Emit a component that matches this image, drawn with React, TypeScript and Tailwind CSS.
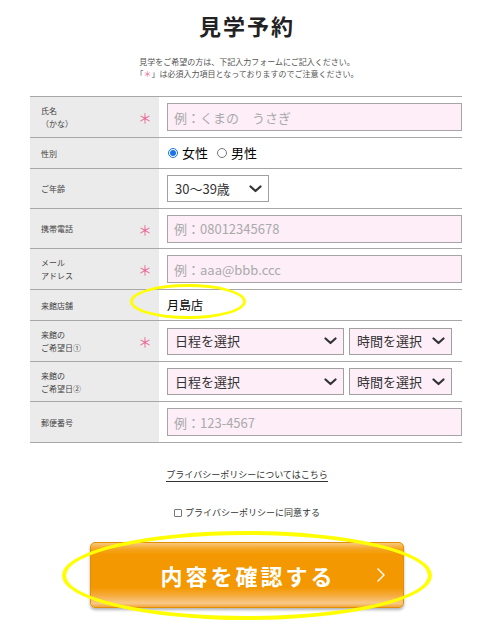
import React from "react";

const font = "font-['Noto_Sans_CJK_JP','Noto_Sans',sans-serif]";

const Chevron = () => (
    <svg width="13" height="8" viewBox="0 0 13 8" className="shrink-0">
        <path d="M1.5 1.5 L6.5 6 L11.5 1.5" fill="none" stroke="#333" strokeWidth="2.2" strokeLinecap="round" strokeLinejoin="round" />
    </svg>
);

interface RowProps {
    label: React.ReactNode;
    required?: boolean;
    h: string;
    children: React.ReactNode;
}

const Row: React.FC<RowProps> = ({ label, required, h, children }) => (
    <div className={`flex border-b border-[#a8a8a8] ${h}`}>
        <div className="flex w-[129px] shrink-0 items-center justify-between bg-[#ebebeb] pl-[11px] pr-[7px]">
            <div className="text-[8px] leading-[13px] text-[#444]">{label}</div>
            {required && <span className="text-[14px] leading-none text-[#ee6a98]">＊</span>}
        </div>
        <div className="relative flex flex-1 items-center gap-[5px] pl-[8px]">{children}</div>
    </div>
);

const TextBox: React.FC<{ ph: string }> = ({ ph }) => (
    <input
        readOnly
        placeholder={ph}
        className="h-[28px] w-full border border-[#a5a5a5] bg-[#fdeef8] px-[6px] text-[13px] text-[#333] outline-none placeholder:text-[#aaa]"
    />
);

const Select: React.FC<{ text: string; w: string; pink?: boolean }> = ({ text, w, pink }) => (
    <div
        className={`flex h-[27px] items-center justify-between border border-[#a0a0a0] pl-[7px] pr-[6px] text-[13px] text-[#333] ${w} ${pink ? "bg-[#fdeef8]" : "bg-white"}`}
    >
        <span>{text}</span>
        <Chevron />
    </div>
);

const Radio: React.FC<{ on?: boolean; text: string }> = ({ on, text }) => (
    <div className="flex items-center gap-[4px] text-[13px] text-black">
        {on ? (
            <span className="flex h-[10px] w-[10px] items-center justify-center rounded-full border border-[#1a73e8]">
                <span className="h-[6px] w-[6px] rounded-full bg-[#1a73e8]" />
            </span>
        ) : (
            <span className="h-[10px] w-[10px] rounded-full border border-[#777]" />
        )}
        <span>{text}</span>
    </div>
);

export default function App() {
    return (
        <div className={`relative min-h-[639px] w-[494px] bg-white ${font}`}>
            <h1 className="pt-[9px] text-center text-[22px] font-bold leading-[32px] tracking-[2px] text-[#222]">
                見学予約
            </h1>
            <div className="mt-[15px] text-center text-[8px] leading-[12px] text-[#555]">
                <p>見学をご希望の方は、下記入力フォームにご記入ください。</p>
                <p>
                    「<span className="text-[#ee6a98]">＊</span>」は必須入力項目となっておりますのでご注意ください。
                </p>
            </div>

            <div className="mx-[30px] mt-[16px] w-[432px] border-t border-[#a8a8a8]">
                <Row h="h-[41px]" required label={<>氏名<br />（かな）</>}>
                    <TextBox ph="例：くまの　うさぎ" />
                </Row>
                <Row h="h-[31px]" label="性別">
                    <div className="flex items-center gap-[9px] pl-[1px]">
                        <Radio on text="女性" />
                        <Radio text="男性" />
                    </div>
                </Row>
                <Row h="h-[40px]" label="ご年齢">
                    <Select text="30～39歳" w="w-[102px]" />
                </Row>
                <Row h="h-[40px]" required label="携帯電話">
                    <TextBox ph="例：08012345678" />
                </Row>
                <Row h="h-[41px]" required label={<>メール<br />アドレス</>}>
                    <TextBox ph="例：aaa@bbb.ccc" />
                </Row>
                <Row h="h-[31px]" label="来館店舗">
                    <span className="text-[12px] text-black">月島店</span>
                    <div className="absolute left-[-29px] top-[-6px] h-[35px] w-[116px] rounded-[50%] border-[3px] border-[#ffff00]" />
                </Row>
                <Row h="h-[41px]" required label={<>来館の<br />ご希望日①</>}>
                    <Select text="日程を選択" w="w-[177px]" pink />
                    <Select text="時間を選択" w="w-[103px]" pink />
                </Row>
                <Row h="h-[40px]" label={<>来館の<br />ご希望日②</>}>
                    <Select text="日程を選択" w="w-[177px]" pink />
                    <Select text="時間を選択" w="w-[103px]" pink />
                </Row>
                <Row h="h-[41px]" label="郵便番号">
                    <TextBox ph="例：123-4567" />
                </Row>
            </div>

            <p className="mt-[25px] text-center text-[9px] leading-[14px] text-[#333]">
                <span className="border-b border-[#333]">プライバシーポリシーについてはこちら</span>
            </p>
            <div className="mt-[24px] flex items-center justify-center gap-[3px] text-[9px] leading-[14px] text-[#333]">
                <span className="h-[8px] w-[8px] rounded-[1px] border border-[#777] bg-white" />
                <span>プライバシーポリシーに同意する</span>
            </div>

            <div className="relative mx-auto mt-[22px] w-[314px]">
                <div className="relative flex h-[66px] items-center justify-center rounded-[5px] border border-[#e28f00] bg-[linear-gradient(to_bottom,#f8c77e_0%,#f5a623_9%,#f39800_18%,#f39800_70%,#f5ab3d_82%,#f8c98a_94%,#f2a73a_100%)] shadow-[0_2px_3px_rgba(0,0,0,0.3)]">
                    <span className="pl-[2px] text-[22px] font-bold tracking-[3px] text-white">内容を確認する</span>
                    <svg width="10" height="16" viewBox="0 0 10 16" className="absolute right-[17px] top-[24px]">
                        <path d="M1.5 1.5 L8 8 L1.5 14.5" fill="none" stroke="#fff" strokeWidth="1.4" />
                    </svg>
                </div>
                <div className="absolute left-[-28px] top-[-11px] h-[89px] w-[370px] rounded-[50%] border-[4px] border-[#ffff00]" />
            </div>
        </div>
    );
}
